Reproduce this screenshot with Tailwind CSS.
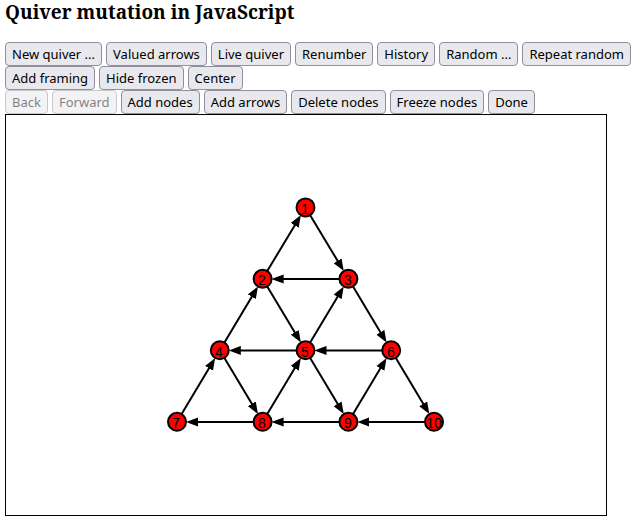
<!DOCTYPE html>
<html lang="en">
<head>
<meta charset="utf-8">
<title>Quiver mutation in JavaScript</title>
<script src="https://cdn.jsdelivr.net/npm/@tailwindcss/browser@4"></script>
</head>
<body class="bg-white px-[5px] font-['Noto_Sans',sans-serif] text-[13px] leading-[18px] text-black">
<h1 class="mb-[18px] font-['Noto_Serif','Droid_Serif','DejaVu_Serif',serif] text-[19px] leading-6 font-bold">Quiver mutation in JavaScript</h1>
<main>
  <div class="flex flex-wrap gap-x-1 [&>button]:h-6 [&>button]:rounded-sm [&>button]:border [&>button]:border-[#8f8f9d] [&>button]:bg-[#e9e9ed] [&>button]:px-1.5">
    <button type="button">New quiver ...</button>
    <button type="button">Valued arrows</button>
    <button type="button">Live quiver</button>
    <button type="button">Renumber</button>
    <button type="button">History</button>
    <button type="button">Random ...</button>
    <button type="button">Repeat random</button>
    <button type="button">Add framing</button>
    <button type="button">Hide frozen</button>
    <button type="button">Center</button>
  </div>
  <div class="flex flex-wrap gap-x-1 [&>button]:h-6 [&>button]:rounded-sm [&>button]:border [&>button]:border-[#8f8f9d] [&>button]:bg-[#e9e9ed] [&>button]:px-1.5 [&>button]:disabled:opacity-50">
    <button type="button" disabled>Back</button>
    <button type="button" disabled>Forward</button>
    <button type="button">Add nodes</button>
    <button type="button">Add arrows</button>
    <button type="button">Delete nodes</button>
    <button type="button">Freeze nodes</button>
    <button type="button">Done</button>
  </div>
  <div class="max-w-[602px] border border-black">
    <svg class="block h-auto w-full" viewBox="0 0 600 400" role="img" aria-label="Quiver with ten nodes">
      <defs>
        <marker id="head" markerUnits="userSpaceOnUse" markerWidth="12" markerHeight="10" refX="7" refY="5" orient="auto">
          <path d="M0 0.4 L12 5 L0 9.6 Z"/>
        </marker>
      </defs>
      <g stroke="black" stroke-width="2">
        <path marker-end="url(#head)" d="M256.6 163.8L292.3 104.4"/>
        <path marker-end="url(#head)" d="M213.8 235.3L249.4 175.8"/>
        <path marker-end="url(#head)" d="M299.5 235.3L335.2 175.8"/>
        <path marker-end="url(#head)" d="M171 306.8L206.6 247.3"/>
        <path marker-end="url(#head)" d="M256.6 306.8L292.3 247.3"/>
        <path marker-end="url(#head)" d="M342.4 306.8L378 247.3"/>
        <path marker-end="url(#head)" d="M299.5 92.4L335.2 151.8"/>
        <path marker-end="url(#head)" d="M256.6 163.8L292.3 223.3"/>
        <path marker-end="url(#head)" d="M342.4 163.8L378 223.3"/>
        <path marker-end="url(#head)" d="M213.8 235.3L249.4 294.8"/>
        <path marker-end="url(#head)" d="M299.5 235.3L335.2 294.8"/>
        <path marker-end="url(#head)" d="M385.2 235.3L420.8 294.8"/>
        <path marker-end="url(#head)" d="M342.4 164H270.6"/>
        <path marker-end="url(#head)" d="M299.5 235.5H227.8"/>
        <path marker-end="url(#head)" d="M385.2 235.5H313.5"/>
        <path marker-end="url(#head)" d="M256.6 307H185"/>
        <path marker-end="url(#head)" d="M342.4 307H270.6"/>
        <path marker-end="url(#head)" d="M428 307H356.4"/>
      </g>
      <g fill="red" stroke="black" stroke-width="2">
        <circle cx="299.5" cy="92.4" r="9"/>
        <circle cx="256.6" cy="163.8" r="9"/>
        <circle cx="342.4" cy="163.8" r="9"/>
        <circle cx="213.8" cy="235.3" r="9"/>
        <circle cx="299.5" cy="235.3" r="9"/>
        <circle cx="385.2" cy="235.3" r="9"/>
        <circle cx="171" cy="306.8" r="9"/>
        <circle cx="256.6" cy="306.8" r="9"/>
        <circle cx="342.4" cy="306.8" r="9"/>
        <circle cx="428" cy="306.8" r="9"/>
      </g>
      <g class="font-['Liberation_Sans',Arial,sans-serif] text-[14px]" text-anchor="middle">
        <text x="299" y="99">1</text>
        <text x="256" y="170">2</text>
        <text x="342" y="170">3</text>
        <text x="213" y="242">4</text>
        <text x="299" y="242">5</text>
        <text x="385" y="242">6</text>
        <text x="170" y="313">7</text>
        <text x="256" y="313">8</text>
        <text x="342" y="313">9</text>
        <text x="428" y="313">10</text>
      </g>
    </svg>
  </div>
</main>
</body>
</html>
